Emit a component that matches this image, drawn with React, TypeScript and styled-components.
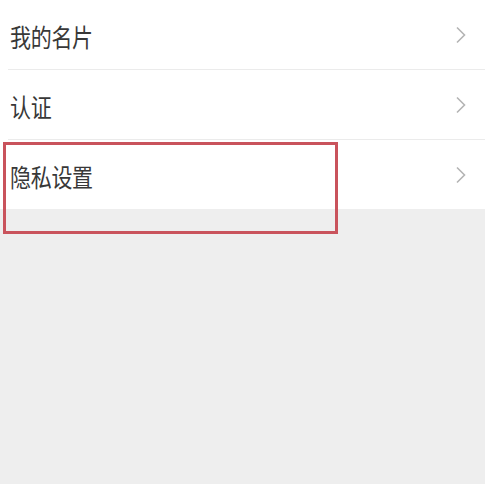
import styled, { createGlobalStyle } from "styled-components";

const GlobalStyle = createGlobalStyle`
  html, body {
    margin: 0;
    padding: 0;
    background: #eeeeee;
    font-family: "Noto Sans CJK SC", "Noto Sans", sans-serif;
  }
`;

const Page = styled.div`
  position: relative;
  width: 485px;
  height: 484px;
  background: #eeeeee;
  overflow: hidden;
`;

const List = styled.div`
  background: #ffffff;
  display: flex;
  flex-direction: column;
`;

const Row = styled.div`
  height: 69px;
  display: flex;
  align-items: center;
  justify-content: space-between;
  padding: 0 18px 0 10px;
`;

const Divider = styled.div`
  height: 1px;
  margin-left: 8px;
  background: #ebebeb;
`;

const Label = styled.span`
  font-size: 21px;
  font-weight: 400;
  color: #383838;
  letter-spacing: -0.3px;
  display: inline-block;
  transform: scaleY(1.18) translateY(1px);
  transform-origin: left center;
`;

const Chevron = () => (
  <svg width="12" height="18" viewBox="0 0 12 18" fill="none">
    <path d="M2 1.5 L9.5 9 L2 16.5" stroke="#b4b4b4" strokeWidth="1.6" />
  </svg>
);

const Highlight = styled.div`
  position: absolute;
  left: 3px;
  top: 142px;
  width: 335px;
  height: 92px;
  box-sizing: border-box;
  border: 3px solid #c9535c;
  pointer-events: none;
`;

const items = ["我的名片", "认证", "隐私设置"];

export default function App() {
  return (
    <Page>
      <GlobalStyle />
      <List>
        {items.map((t, i) => (
          <div key={t}>
            <Row>
              <Label>{t}</Label>
              <Chevron />
            </Row>
            {i < items.length - 1 && <Divider />}
          </div>
        ))}
      </List>
      <Highlight />
    </Page>
  );
}
